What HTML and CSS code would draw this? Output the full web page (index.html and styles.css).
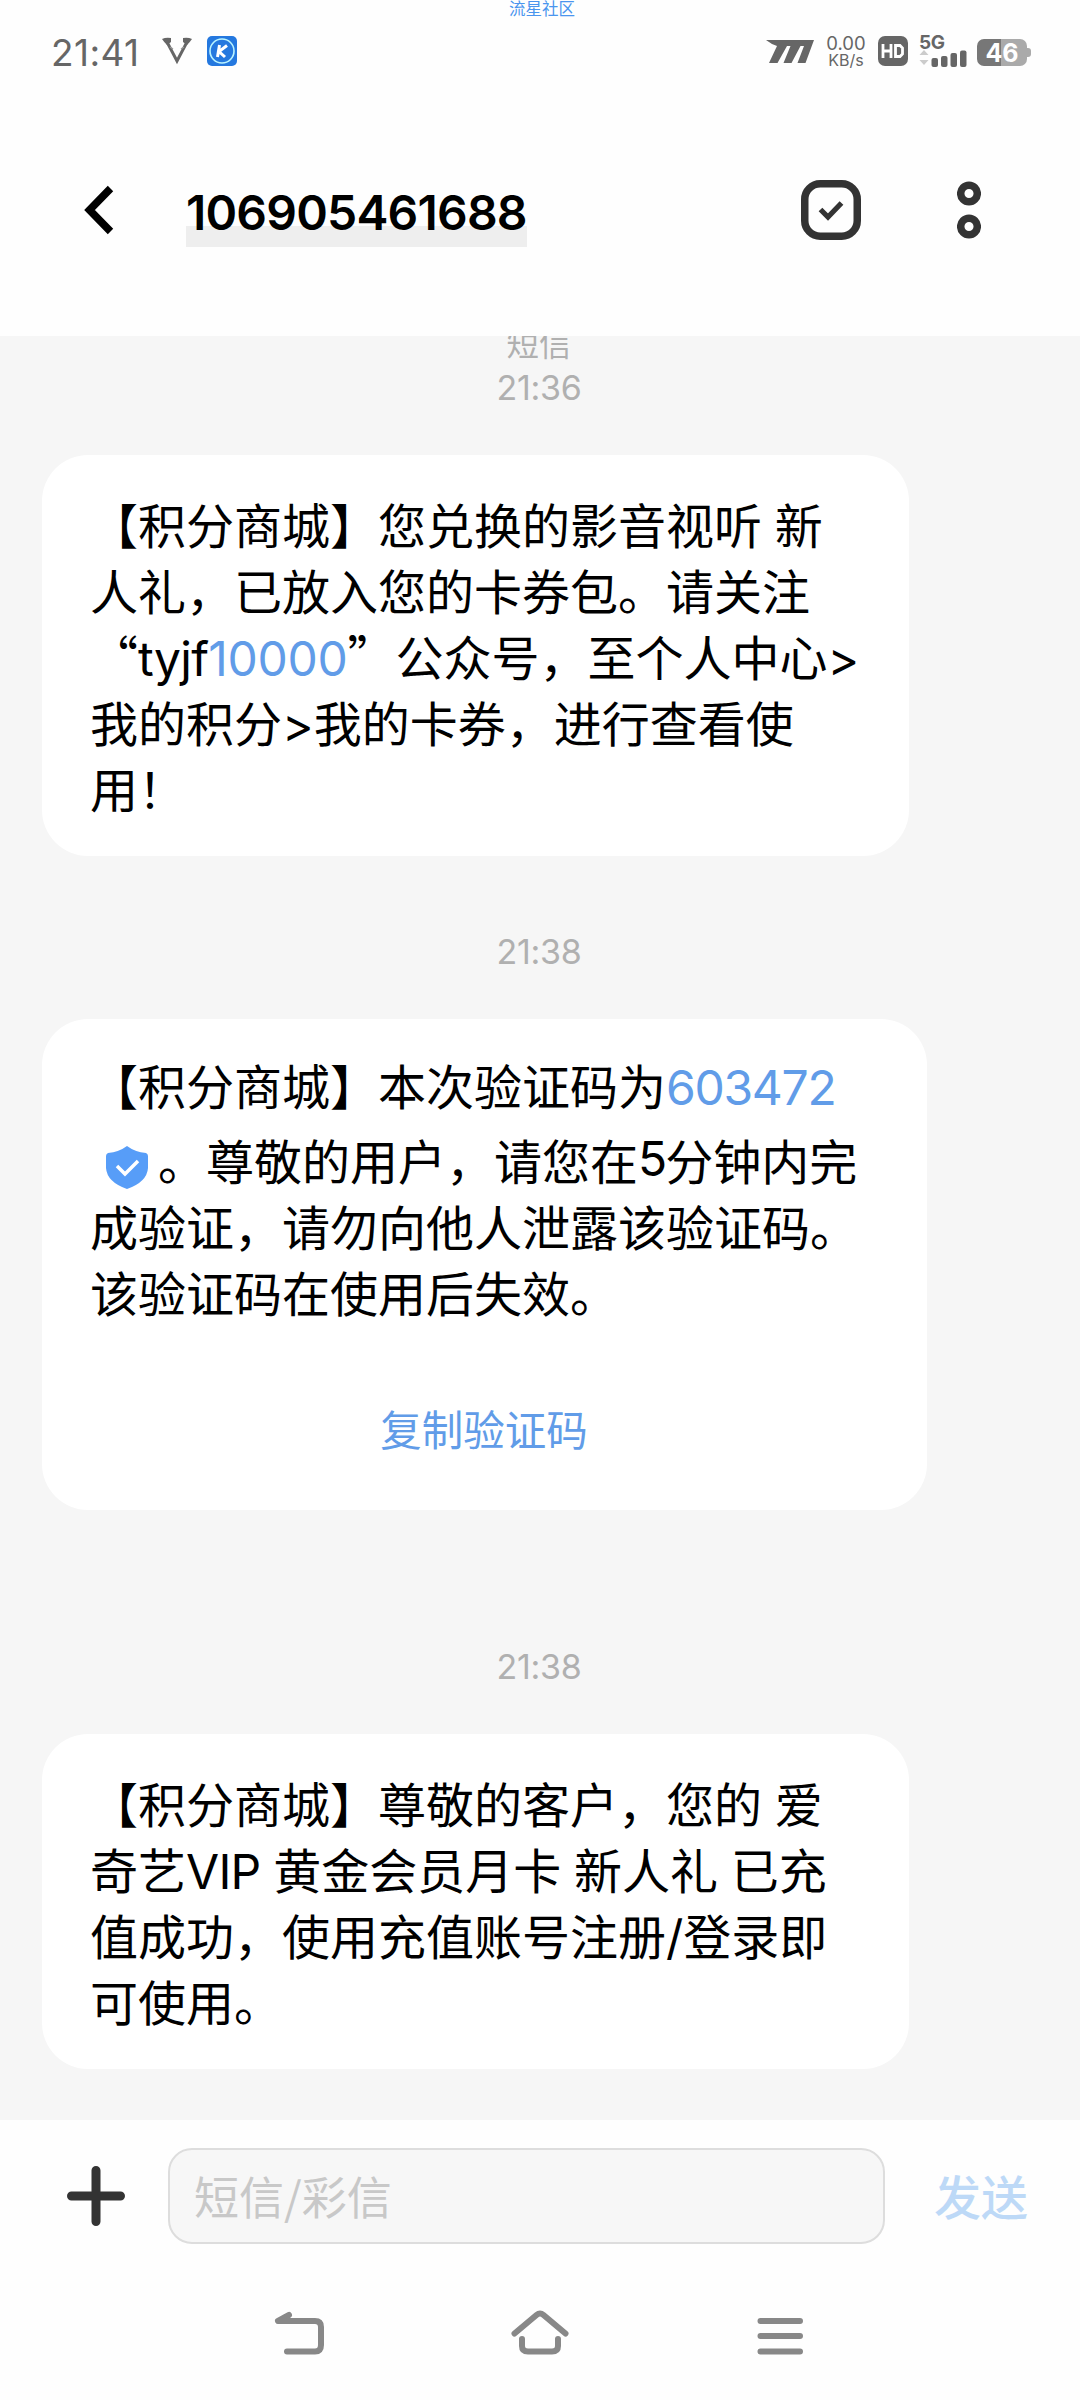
FILE: index.html
```html
<!DOCTYPE html>
<html lang="zh-CN">
<head>
<meta charset="utf-8">
<title>106905461688</title>
<link rel="stylesheet" href="styles.css">
</head>
<body>
<div class="phone">
  <div class="watermark">流星社区</div>
  <div class="status">
    <div class="status-left">
      <span class="clock">21:41</span>
      <svg class="icon-v" width="30" height="28" viewBox="0 0 30 28"><path d="M4.500 4L15 24L25.500 4" fill="none" stroke="#666" stroke-width="3"/><path d="M0 2Q4 0 9 1L9 5L5 8Q2 5 0 2ZM30 2Q26 0 21 1L21 5L25 8Q28 5 30 2Z" fill="#666"/><path d="M8 10L11 12M22 10L19 12" stroke="#999" stroke-width="1.500"/></svg>
      <svg width="30" height="30" viewBox="0 0 30 30"><rect width="30" height="30" rx="5" fill="#2478df"/><circle cx="15" cy="15" r="12" fill="none" stroke="#b9f4ff" stroke-width="1.600"/><path d="M12.500 9L10.500 21M20 9.500L12 15.500L18 21" fill="none" stroke="#fff" stroke-width="3"/></svg>
    </div>
    <div class="status-right">
      <svg width="48" height="23" viewBox="0 0 48 23"><path d="M0 0H48L39.500 23H31.500L38 6H34.500L25.500 23H17.500L24.500 6H21L11.500 23H3L11 6Q5 4 0 0Z" fill="#666"/></svg>
      <div class="speed"><span class="rate">0.00</span><span class="unit">KB/s</span></div>
      <svg width="30" height="30" viewBox="0 0 30 30"><rect width="30" height="30" rx="7" fill="#666"/><path d="M5 8V22M13 8V22M5 15H13M17.500 9.500H22L24.500 12V18L22 20.500H17.500Z" fill="none" stroke="#fff" stroke-width="2.800"/></svg>
      <div class="signal">
        <span class="net">5G</span>
        <svg width="48" height="18" viewBox="0 0 48 18"><path d="M0.500 6L5 1L9.500 6ZM0.500 11L5 16L9.500 11Z" fill="#ccc"/><g fill="#666"><rect x="12.500" y="9" width="6.500" height="9" rx="2"/><rect x="22" y="7" width="6.500" height="11" rx="2"/><rect x="31.500" y="4" width="6.500" height="14" rx="2"/><rect x="41" y="1.500" width="6.500" height="16.500" rx="2"/></g></svg>
      </div>
      <div class="battery"><span>46</span></div>
    </div>
  </div>

  <header class="topbar">
    <svg class="back" width="32" height="50" viewBox="0 0 32 50"><path d="M27.500 3.500L6.500 25L27.500 46.500" fill="none" stroke="#000" stroke-width="7.600"/></svg>
    <h1 class="title">106905461688</h1>
    <svg class="select" width="60" height="60" viewBox="0 0 60 60"><rect x="3.750" y="3.750" width="52.500" height="52.500" rx="15.500" fill="none" stroke="#333" stroke-width="7.500"/><path d="M19.500 29.500L27 37L40.500 23" fill="none" stroke="#333" stroke-width="5.200"/></svg>
    <svg class="more" width="24" height="60" viewBox="0 0 24 60"><g fill="none" stroke="#333" stroke-width="7.500"><circle cx="12" cy="13.500" r="8.300"/><circle cx="12" cy="46.500" r="8.300"/></g></svg>
  </header>

  <main class="chat">
    <div class="stamp kind">短信</div>
    <div class="stamp first">21:36</div>
    <section class="bubble">
      <p>【积分商城】您兑换的影音视听 新</p>
      <p>人礼，已放入您的卡券包。请关注</p>
      <p>“<span class="word">tyjf</span><span class="num account">10000</span>”公众号，至个人中心<span class="gt">&gt;</span></p>
      <p>我的积分<span class="gt">&gt;</span>我的卡券，进行查看使</p>
      <p>用！</p>
    </section>
    <div class="stamp">21:38</div>
    <section class="bubble code">
      <p>【积分商城】本次验证码为<span class="num">603472</span></p>
      <p class="shielded"><svg class="shield" width="42" height="43" viewBox="0 0 42 43"><path d="M21 0Q29 6 40 7Q42 8 42 10V22Q41 36 21 43Q1 36 0 22V10Q0 8 2 7Q13 6 21 0Z" fill="#579df8"/><path d="M11 20L19 28L32 15" fill="none" stroke="#fff" stroke-width="3.500"/></svg>。尊敬的用户，请您在<span class="digit">5</span>分钟内完</p>
      <p>成验证，请勿向他人泄露该验证码。</p>
      <p>该验证码在使用后失效。</p>
      <div class="copy">复制验证码</div>
    </section>
    <div class="stamp">21:38</div>
    <section class="bubble">
      <p>【积分商城】尊敬的客户，您的 爱</p>
      <p>奇艺<span class="vip">VIP</span> 黄金会员月卡 新人礼 已充</p>
      <p>值成功，使用充值账号注册<span class="slash">/</span>登录即</p>
      <p>可使用。</p>
    </section>
  </main>

  <div class="composer">
    <svg class="plus" width="58" height="60" viewBox="0 0 58 60"><path d="M4.500 30H53.500M29 4.500V55.500" stroke="#333" stroke-width="9" stroke-linecap="round"/></svg>
    <div class="field">短信/彩信</div>
    <div class="send">发送</div>
  </div>
  <nav class="nav">
    <svg width="60" height="50" viewBox="0 0 60 50"><path d="M19 7L8 13H45Q51 13 51 19V37Q51 43.500 45 43.500H17" fill="none" stroke="#888" stroke-width="6" stroke-linecap="round" stroke-linejoin="round"/></svg>
    <svg width="60" height="50" viewBox="0 0 60 50"><path d="M4.500 25.500L26.500 7Q30 4 33.500 7L55.500 25.500M12 31V38Q12 43.500 18 43.500H42Q48 43.500 48 38V31" fill="none" stroke="#888" stroke-width="6" stroke-linecap="round"/></svg>
    <svg width="60" height="50" viewBox="0 0 60 50"><path d="M10.500 13H50M10.500 28H50M10.500 43.500H50" fill="none" stroke="#888" stroke-width="6" stroke-linecap="round"/></svg>
  </nav>
</div>
</body>
</html>
```

FILE: styles.css
```css
* { box-sizing: border-box; }
body { margin: 0; background: #fff; font-family: "Noto Sans CJK SC", sans-serif; }
p, h1 { margin: 0; }
svg { display: block; flex: none; }
.phone { width: 1080px; height: 2400px; overflow: hidden; display: flex; flex-direction: column; background: #fefefe; }

.watermark { height: 16px; line-height: 16px; font-size: 16.5px; text-align: center; color: #4a95ee; padding-left: 4px; }
.status { height: 70px; display: flex; justify-content: space-between; padding: 0 48px 0 51px; color: #666; font-family: Inter, sans-serif; }
.status-left, .status-right { display: flex; align-items: center; }
.clock { width: 111px; font-size: 37px; line-height: 70px; letter-spacing: 0.4px; padding-top: 3px; }
.icon-v { margin-right: 15px; }
.status-right { gap: 13px; }
.speed { display: flex; flex-direction: column; align-items: center; width: 38px; height: 34px; }
.rate { font-size: 18.5px; line-height: 18px; }
.unit { font-size: 16px; line-height: 17px; }
.signal { width: 48px; height: 32px; margin-left: -2px; }
.net { display: block; height: 14px; font-size: 19px; line-height: 16px; font-weight: 700; letter-spacing: -0.5px; }
.battery { position: relative; width: 50px; height: 27px; margin: 2px 5px 0 -3px; border-radius: 7px; background: linear-gradient(90deg, #777 24px, #aaa 24px); color: #fff; text-align: center; font-size: 25px; line-height: 29px; font-weight: 700; }
.battery::after { content: ""; position: absolute; left: 50px; top: 9px; width: 4px; height: 9px; border-radius: 0 3px 3px 0; background: #aaa; }

.topbar { height: 250px; display: flex; align-items: flex-start; padding: 94px 99px 0 83px; }
.back { margin: 5px 71px 0 0; }
.title { width: 341px; height: 61px; margin-top: 6px; font: 600 48px/54px Inter, sans-serif; letter-spacing: -0.8px; white-space: nowrap; background: linear-gradient(transparent 40px, #eee 40px); }
.select { margin-left: auto; }
.more { margin-left: 96px; }

.chat { height: 1784px; overflow: hidden; background: #f6f6f6; display: flex; flex-direction: column; align-items: flex-start; padding-left: 42px; }
.stamp { width: 996px; height: 40px; margin: 76px 0 47px; text-align: center; color: #b0b0b0; font: 34px/40px Inter, sans-serif; letter-spacing: -0.3px; padding-right: 2px; }
.kind { font: 32.500px/40px "Noto Sans CJK SC", sans-serif; margin: -14px 0 5px; letter-spacing: 0; }
.first { margin: 1px 0 47px; }
.bubble { flex: none; width: 867px; border-radius: 46px; background: #fff; padding: 35px 0 36px 48px; color: #000; font-size: 48px; line-height: 66px; white-space: nowrap; }
.bubble p { height: 66px; word-spacing: 2px; }
.word, .num, .gt, .digit, .vip, .slash { font-family: Inter, sans-serif; }
.num { color: #619ce8; letter-spacing: -1.3px; }
.account { letter-spacing: -0.3px; }
.word { letter-spacing: -0.7px; }
.vip { letter-spacing: -0.7px; }
.digit { letter-spacing: -2px; }
.code { width: 885px; height: 491px; padding-top: 32px; margin-bottom: 61px; }
.bubble .shielded { height: 75px; display: flex; padding-top: 9px; }
.shield { margin: 20px 10px 0 16px; }
.copy { margin: 71px 49px 0 0; text-align: center; font-size: 41.500px; color: #619ce8; }

.composer { height: 152px; display: flex; align-items: flex-start; padding: 28px 0 0 67px; }
.plus { margin: 18px 43px 0 0; }
.field { width: 717px; height: 96px; border: 2px solid #ddd; border-radius: 24px; background: #f7f7f7; color: #c8c8c8; font-size: 45px; line-height: 92px; padding-left: 24px; }
.send { margin-left: 49px; font-size: 47px; line-height: 94px; font-weight: 500; color: #bdd9f7; }
.nav { height: 128px; display: flex; justify-content: center; gap: 180px; padding-top: 36px; }
```
